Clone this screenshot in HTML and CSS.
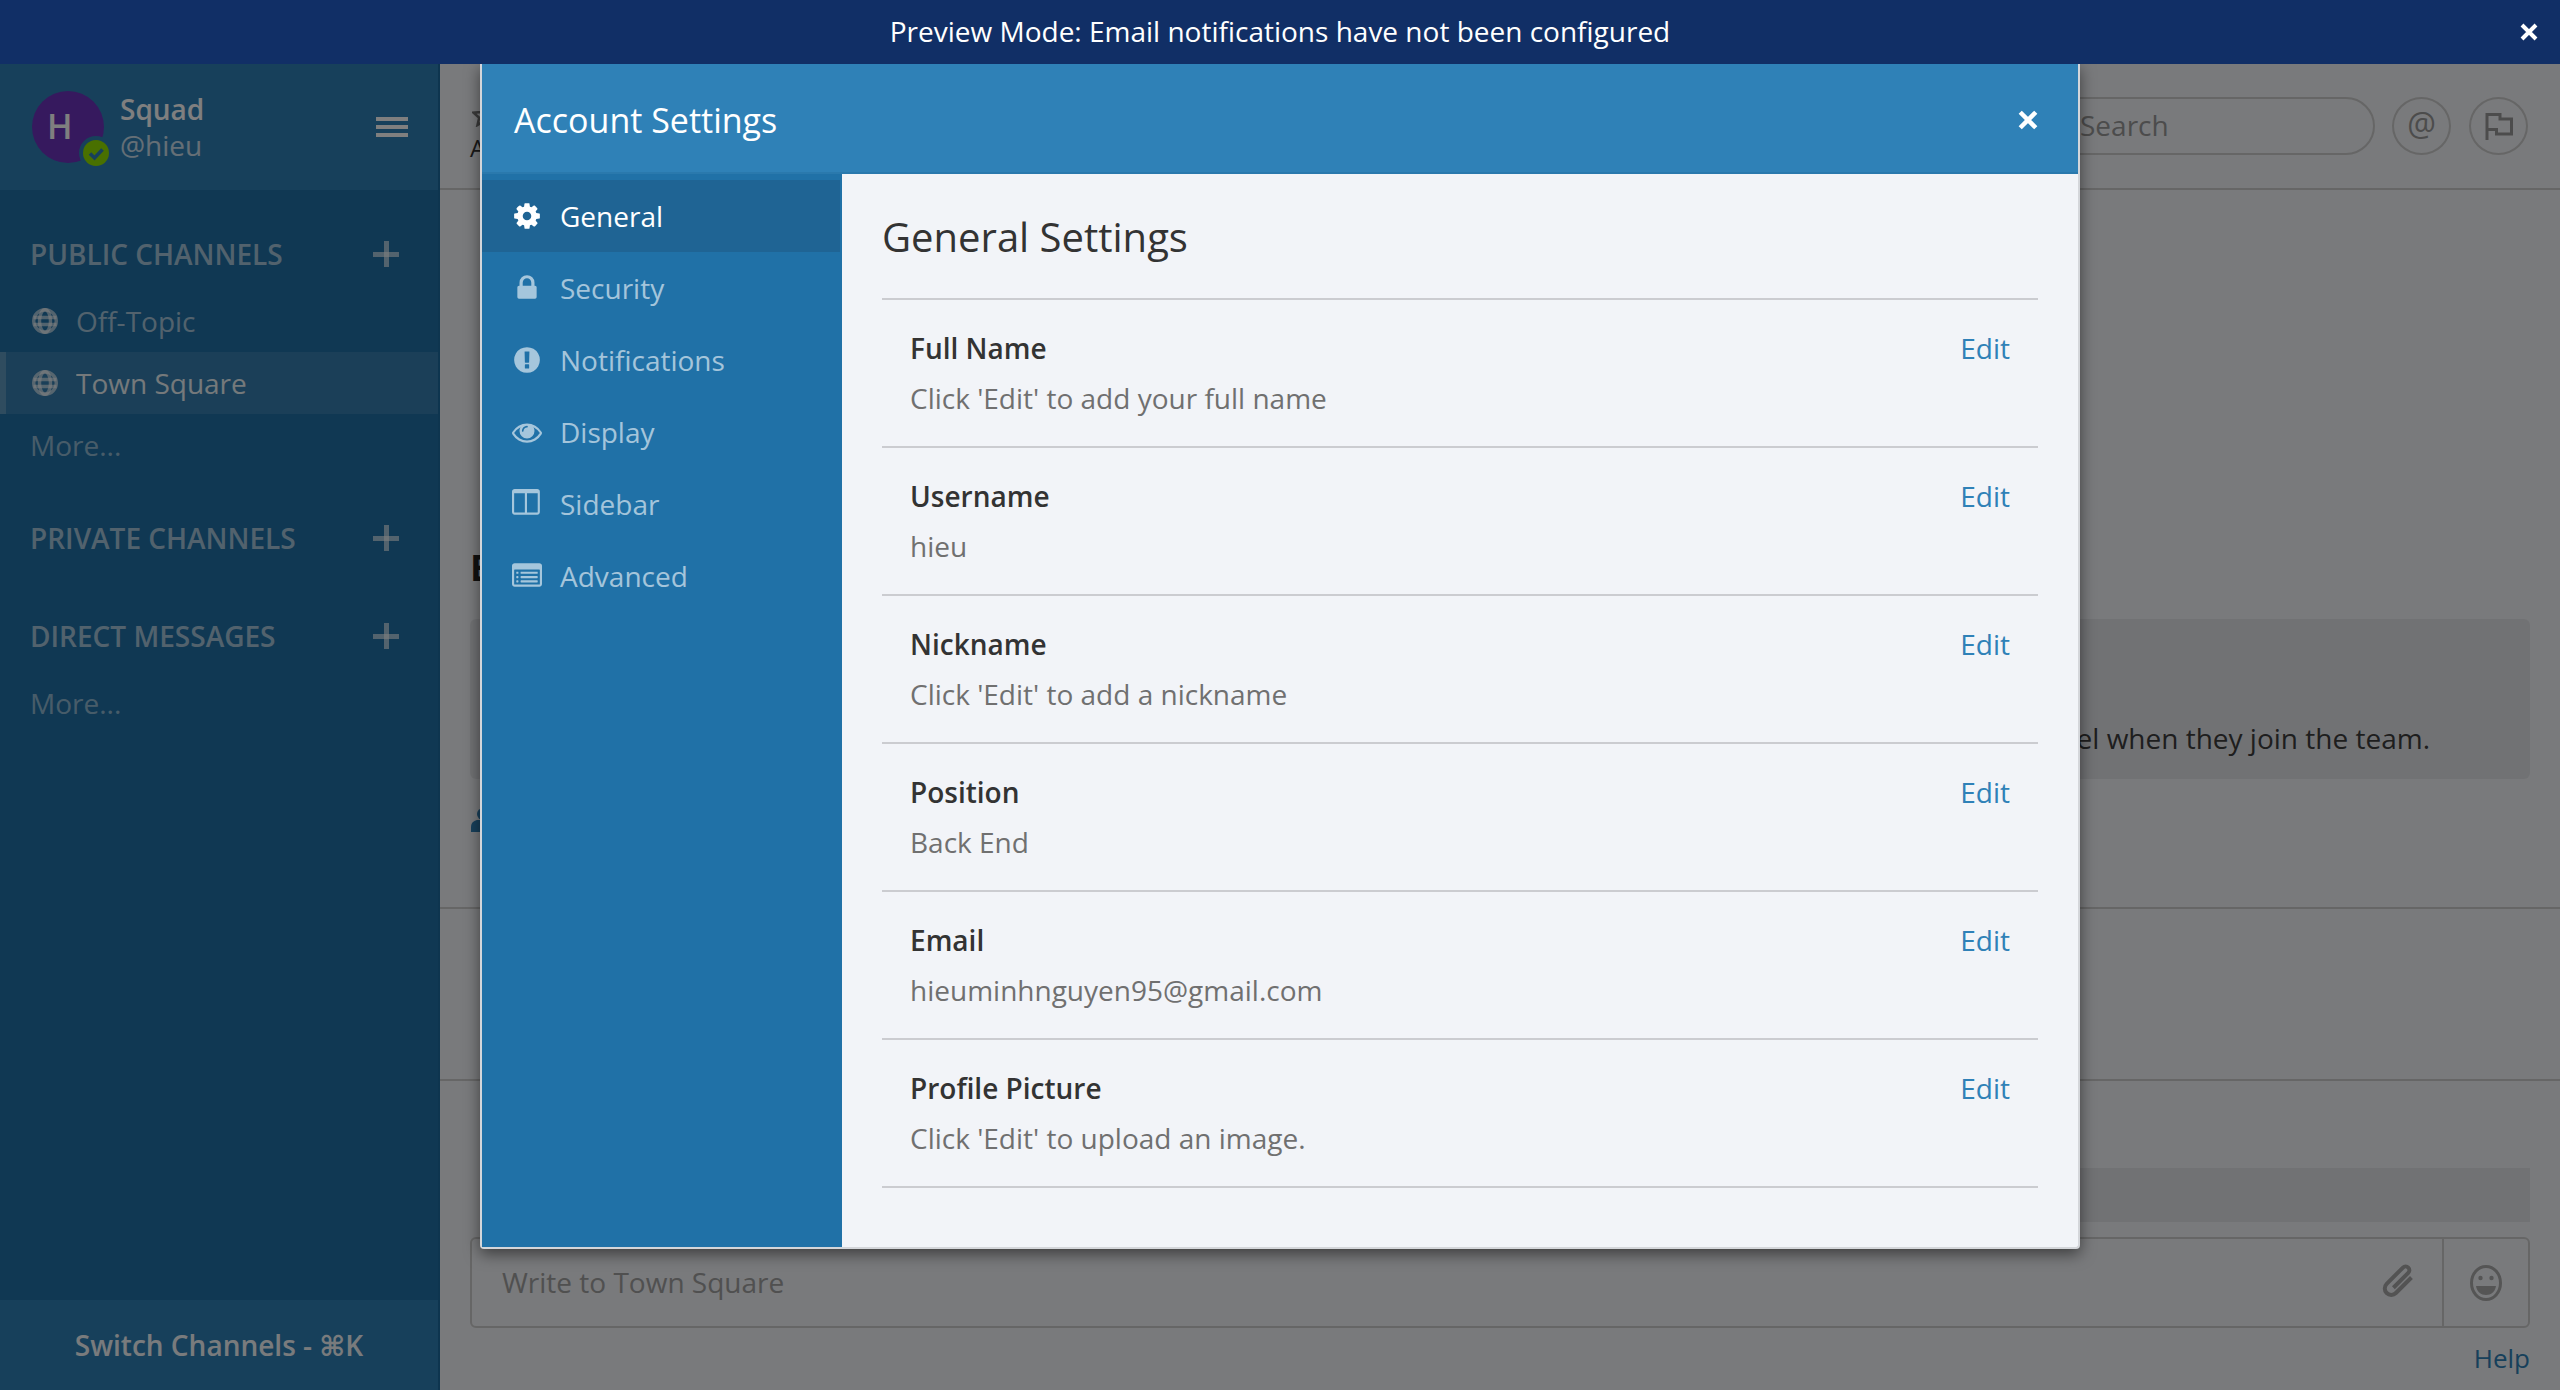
FILE: index.html
```html
<!DOCTYPE html>
<html lang="en">
<head>
  <meta charset="UTF-8">
  <title>Account Settings</title>
  <link rel="stylesheet" href="styles.css">
</head>
<body>
  <div class="banner">
    <span class="banner-spacer"></span>
    <span class="banner-text">Preview Mode: Email notifications have not been configured</span>
    <svg class="close-icon" viewBox="0 0 18 18"><path d="M2 2l14 14M16 2L2 16"/></svg>
  </div>

  <div class="app">
    <aside class="sidebar">
      <div class="sidebar-header">
        <div class="avatar">H
          <span class="status">
            <svg viewBox="0 0 26 26"><circle cx="13" cy="13" r="13" fill="#92e000"/><path d="M7 13.500l4.500 4.500 8-8.500" fill="none" stroke="#2f81b7" stroke-width="3.600"/></svg>
          </span>
        </div>
        <div class="team">
          <div class="team-name">Squad</div>
          <div class="team-user">@hieu</div>
        </div>
        <div class="hamburger"><i></i><i></i><i></i></div>
      </div>

      <div class="section-title first">Public Channels <span class="plus"></span></div>
      <a class="channel">
        <svg class="globe" viewBox="0 0 26 26"><use href="#globe"/></svg>
        <span>Off-Topic</span>
      </a>
      <a class="channel active">
        <svg class="globe" viewBox="0 0 26 26"><use href="#globe"/></svg>
        <span>Town Square</span>
      </a>
      <a class="channel more">More...</a>

      <div class="section-title private">Private Channels <span class="plus"></span></div>
      <div class="section-title direct">Direct Messages <span class="plus"></span></div>
      <a class="channel more after-direct">More...</a>

      <div class="switcher">Switch Channels - ⌘K</div>
    </aside>

    <main class="main">
      <header class="channel-header">
        <div class="channel-info">
          <svg class="star" viewBox="0 0 24 24"><path d="M12 2l3 7 7.500 .7-5.700 5 1.700 7.300-6.500-3.900-6.500 3.900 1.700-7.300-5.700-5 7.500-.7z"/></svg>
          <span>A</span>
        </div>
        <div class="search">Search</div>
        <div class="round-btn at">@</div>
        <div class="round-btn">
          <svg class="flag" viewBox="0 0 30 28"><path d="M3 28V1M3 2.500h13V7h11.500v15H12.500v-4.500H3"/></svg>
        </div>
      </header>

      <section class="posts">
        <h2>B</h2>
        <div class="intro">channel when they join the team.</div>
        <svg class="person" viewBox="0 0 24 24"><circle cx="13" cy="6" r="6"/><path d="M1 24v-5c0-5 4-7 7-7h10c3 0 6 2 6 7v5z"/></svg>
      </section>

      <section class="middle"></section>

      <section class="composer">
        <div class="hint-bar"></div>
        <div class="post-box">
          <span class="placeholder">Write to Town Square</span>
          <svg class="clip" viewBox="0 0 34 32"><path transform="rotate(45 17 16)" d="M24 4V26a6.500 6.500 0 0 1-13 0V3a3.700 3.700 0 0 1 7.500 0V24"/></svg>
          <span class="emoji-cell">
            <svg class="smile" viewBox="0 0 32 36"><ellipse cx="16" cy="18" rx="14.500" ry="16.500"/><circle class="solid" cx="10.500" cy="13" r="2.200"/><circle class="solid" cx="21.500" cy="13" r="2.200"/><path class="solid" d="M6 21h20c-1 6-5 9-10 9s-9-3-10-9z"/></svg>
          </span>
        </div>
        <div class="help">Help</div>
      </section>
    </main>
  </div>

  <div class="overlay"></div>

  <div class="modal">
    <div class="modal-header">
      <span>Account Settings</span>
      <svg class="close-icon" viewBox="0 0 18 18"><path d="M2 2l14 14M16 2L2 16"/></svg>
    </div>
    <div class="modal-body">
      <nav class="tabs">
        <a class="tab active">
          <svg viewBox="0 0 1792 1792"><path d="M1152 896q0-106-75-181t-181-75-181 75-75 181 75 181 181 75 181-75 75-181zm512-109v222q0 12-8 23t-20 13l-185 28q-19 54-39 91 35 50 107 138 10 12 10 25t-9 23q-27 37-99 108t-94 71q-12 0-26-9l-138-108q-44 23-91 38-16 136-29 186-7 28-36 28h-222q-14 0-24.500-8.500t-11.500-21.500l-28-184q-49-16-90-37l-141 107q-10 9-25 9-14 0-25-11-126-114-165-168-7-10-7-23 0-12 8-23 15-21 51-66.500t54-70.500q-27-50-41-99l-183-27q-13-2-21-12.500t-8-23.500v-222q0-12 8-23t19-13l186-28q14-46 39-92-40-57-107-138-10-12-10-24 0-10 9-23 26-36 98.500-107.500t94.500-71.500q13 0 26 10l138 107q44-23 91-38 16-136 29-186 7-28 36-28h222q14 0 24.500 8.500t11.500 21.500l28 184q49 16 90 37l142-107q9-9 24-9 13 0 25 10 129 119 165 170 7 8 7 22 0 12-8 23-15 21-51 66.500t-54 70.500q26 50 41 98l183 28q13 2 21 12.500t8 23.500z"/></svg>
          General
        </a>
        <a class="tab">
          <svg viewBox="0 0 1792 1792"><path d="M640 768h512v-192q0-106-75-181t-181-75-181 75-75 181v192zm832 96v576q0 40-28 68t-68 28h-960q-40 0-68-28t-28-68v-576q0-40 28-68t68-28h32v-192q0-184 132-316t316-132 316 132 132 316v192h32q40 0 68 28t28 68z"/></svg>
          Security
        </a>
        <a class="tab">
          <svg viewBox="0 0 1792 1792"><path d="M896 128q209 0 385.500 103t279.500 279.500 103 385.500-103 385.500-279.500 279.500-385.500 103-385.500-103-279.500-279.500-103-385.500 103-385.500 279.500-279.500 385.500-103zm128 1247v-190q0-14-9-23.500t-22-9.500h-192q-13 0-23 10t-10 23v190q0 13 10 23t23 10h192q13 0 22-9.500t9-23.500zm-2-344l18-621q0-12-10-18-10-8-24-8h-220q-14 0-24 8-10 6-10 18l17 621q0 10 10 17.500t24 7.500h185q14 0 23.500-7.500t10.500-17.500z"/></svg>
          Notifications
        </a>
        <a class="tab">
          <svg viewBox="0 0 1792 1792"><path d="M1664 960q-152-236-381-353 61 104 61 225 0 185-131.500 316.500t-316.500 131.500-316.500-131.500-131.500-316.500q0-121 61-225-229 117-381 353 133 205 333.500 326.500t434.500 121.500 434.500-121.500 333.500-326.500zm-720-384q0-20-14-34t-34-14q-125 0-214.500 89.500t-89.500 214.500q0 20 14 34t34 14 34-14 14-34q0-86 61-147t147-61q20 0 34-14t14-34zm848 384q0 34-20 69-140 230-376.500 368.500t-499.500 138.500-499.500-139-376.500-368q-20-35-20-69t20-69q140-229 376.500-368t499.500-139 499.500 139 376.500 368q20 35 20 69z"/></svg>
          Display
        </a>
        <a class="tab">
          <svg viewBox="0 0 1792 1792"><path d="M160 1408h608v-1152h-640v1120q0 13 9.500 22.500t22.500 9.500zm1376-32v-1120h-640v1152h608q13 0 22.500-9.500t9.500-22.500zm128-1216v1216q0 66-47 113t-113 47h-1344q-66 0-113-47t-47-113v-1216q0-66 47-113t113-47h1344q66 0 113 47t47 113z"/></svg>
          Sidebar
        </a>
        <a class="tab">
          <svg viewBox="0 0 1792 1792"><path d="M384 1184v64q0 13-9.500 22.500t-22.500 9.500h-64q-13 0-22.500-9.500t-9.500-22.500v-64q0-13 9.500-22.500t22.500-9.500h64q13 0 22.500 9.500t9.500 22.500zm0-256v64q0 13-9.500 22.500t-22.500 9.500h-64q-13 0-22.500-9.500t-9.500-22.500v-64q0-13 9.500-22.500t22.500-9.500h64q13 0 22.500 9.500t9.500 22.500zm0-256v64q0 13-9.500 22.500t-22.500 9.500h-64q-13 0-22.500-9.500t-9.500-22.500v-64q0-13 9.500-22.500t22.500-9.500h64q13 0 22.500 9.500t9.500 22.500zm1152 512v64q0 13-9.500 22.500t-22.500 9.500h-960q-13 0-22.500-9.500t-9.500-22.500v-64q0-13 9.500-22.500t22.500-9.500h960q13 0 22.500 9.500t9.500 22.500zm0-256v64q0 13-9.500 22.500t-22.500 9.500h-960q-13 0-22.500-9.500t-9.500-22.500v-64q0-13 9.500-22.500t22.500-9.500h960q13 0 22.500 9.500t9.500 22.500zm0-256v64q0 13-9.500 22.500t-22.500 9.500h-960q-13 0-22.500-9.500t-9.500-22.500v-64q0-13 9.500-22.500t22.500-9.500h960q13 0 22.500 9.500t9.500 22.500zm128 704v-832q0-13-9.500-22.500t-22.500-9.500h-1472q-13 0-22.500 9.500t-9.500 22.500v832q0 13 9.500 22.500t22.500 9.500h1472q13 0 22.500-9.500t9.500-22.500zm128-1088v1088q0 66-47 113t-113 47h-1472q-66 0-113-47t-47-113v-1088q0-66 47-113t113-47h1472q66 0 113 47t47 113z"/></svg>
          Advanced
        </a>
      </nav>

      <div class="settings">
        <h3>General Settings</h3>
        <div class="row">
          <div><div class="label">Full Name</div><div class="value">Click 'Edit' to add your full name</div></div>
          <a class="edit">Edit</a>
        </div>
        <div class="row">
          <div><div class="label">Username</div><div class="value">hieu</div></div>
          <a class="edit">Edit</a>
        </div>
        <div class="row">
          <div><div class="label">Nickname</div><div class="value">Click 'Edit' to add a nickname</div></div>
          <a class="edit">Edit</a>
        </div>
        <div class="row">
          <div><div class="label">Position</div><div class="value">Back End</div></div>
          <a class="edit">Edit</a>
        </div>
        <div class="row">
          <div><div class="label">Email</div><div class="value">hieuminhnguyen95@gmail.com</div></div>
          <a class="edit">Edit</a>
        </div>
        <div class="row">
          <div><div class="label">Profile Picture</div><div class="value">Click 'Edit' to upload an image.</div></div>
          <a class="edit">Edit</a>
        </div>
      </div>
    </div>
  </div>

  <svg class="defs" width="0" height="0">
    <symbol id="globe" viewBox="0 0 26 26">
      <g fill="none" stroke="currentColor" stroke-width="3.400">
        <circle cx="13" cy="13" r="11.300"/>
        <ellipse cx="13" cy="13" rx="5.500" ry="11.300"/>
        <path d="M1.500 9.500h23M1.500 16.500h23"/>
      </g>
    </symbol>
  </svg>
</body>
</html>
```

FILE: styles.css
```css
* {
  box-sizing: border-box;
}
body {
  margin: 0;
  height: 100vh;
  overflow: hidden;
  display: flex;
  flex-direction: column;
  font-family: "Open Sans", "DejaVu Sans", sans-serif;
  font-size: 28px;
  line-height: 40px;
  color: #333;
  background: #f2f4f8;
}
.defs {
  position: absolute;
}

/* top banner stays above the overlay */
.banner {
  position: relative;
  z-index: 3;
  flex: none;
  height: 64px;
  padding: 0 22px;
  display: flex;
  align-items: center;
  background: #112f66;
  color: #fff;
}
.banner-spacer {
  width: 18px;
}
.banner-text {
  flex: 1;
  padding-bottom: 3px;
  text-align: center;
}
.close-icon {
  width: 18px;
  height: 18px;
  fill: none;
  stroke: #fff;
  stroke-width: 4;
}

.app {
  flex: 1;
  display: flex;
  min-height: 0;
}

/* sidebar */
.sidebar {
  flex: none;
  width: 440px;
  display: flex;
  flex-direction: column;
  background: #2071a7;
  color: #fff;
  border-right: 2px solid #1d6a9e;
}
.sidebar-header {
  flex: none;
  height: 126px;
  padding: 0 30px 0 32px;
  display: flex;
  align-items: center;
  background: #2f81b7;
}
.avatar {
  position: relative;
  flex: none;
  width: 72px;
  height: 72px;
  margin-right: 16px;
  padding-left: 15px;
  border-radius: 50%;
  background: #6c32bc;
  font-size: 34px;
  font-weight: 600;
  line-height: 70px;
}
.status {
  position: absolute;
  right: -9px;
  bottom: -7px;
  width: 34px;
  height: 34px;
  padding: 4px;
  border-radius: 50%;
  background: #2f81b7;
  display: flex;
}
.team {
  flex: 1;
  line-height: 36px;
}
.team-name {
  font-weight: 600;
}
.team-user {
  opacity: 0.75;
}
.hamburger {
  width: 32px;
  display: flex;
  flex-direction: column;
  gap: 4px;
}
.hamburger i {
  display: block;
  height: 4px;
  background: #fff;
}
.section-title {
  flex: none;
  height: 40px;
  padding: 0 30px 0 30px;
  display: flex;
  justify-content: space-between;
  align-items: center;
  font-weight: 600;
  text-transform: uppercase;
  color: rgba(255, 255, 255, 0.6);
}
.section-title.first {
  margin: 44px 0 16px;
}
.section-title.private {
  margin-top: 42px;
}
.section-title.direct {
  margin-top: 58px;
}
.plus {
  width: 26px;
  height: 26px;
  margin-right: 9px;
  background:
    linear-gradient(currentColor, currentColor) center / 100% 5px no-repeat,
    linear-gradient(currentColor, currentColor) center / 5px 100% no-repeat;
}
.channel {
  flex: none;
  height: 62px;
  padding-left: 32px;
  display: flex;
  align-items: center;
  gap: 18px;
  color: rgba(255, 255, 255, 0.6);
}
.channel.active {
  padding-left: 26px;
  border-left: 6px solid rgba(255, 255, 255, 0.2);
  background: rgba(255, 255, 255, 0.1);
  color: #fff;
}
.channel.active span {
  opacity: 0.9;
}
.channel.more {
  padding-left: 30px;
  color: rgba(255, 255, 255, 0.52);
}
.channel.after-direct {
  margin-top: 16px;
}
.globe {
  width: 26px;
  height: 26px;
  color: rgba(255, 255, 255, 0.6);
}
.switcher {
  margin-top: auto;
  flex: none;
  height: 90px;
  padding-bottom: 1px;
  display: flex;
  justify-content: center;
  align-items: center;
  background: #2f81b7;
  font-weight: 600;
  opacity: 0.95;
}

/* channel view behind the dialog */
.main {
  flex: 1;
  min-width: 0;
  display: flex;
  flex-direction: column;
}
.channel-header {
  flex: none;
  height: 126px;
  padding: 33px 32px 0 30px;
  display: flex;
  align-items: flex-start;
  border-bottom: 2px solid #ccc;
}
.channel-info {
  flex: 1;
  display: flex;
  flex-direction: column;
  font-size: 24px;
  line-height: 34px;
  white-space: nowrap;
}
.star {
  width: 24px;
  height: 24px;
  margin: 6px 0 4px 2px;
  fill: none;
  stroke: #777;
  stroke-width: 2.500;
}
.search {
  width: 480px;
  height: 58px;
  margin-right: 17px;
  padding-left: 183px;
  border: 2px solid #ccc;
  border-radius: 29px;
  color: #999;
  line-height: 53px;
}
.round-btn {
  width: 59px;
  height: 58px;
  margin-left: 1px;
  margin-right: 17px;
  border: 2px solid #ccc;
  border-radius: 50%;
  display: flex;
  justify-content: center;
  align-items: center;
  color: #999;
}
.round-btn:last-child {
  margin-right: 0;
}
.round-btn.at {
  font-size: 32px;
  margin-left: 0;
  padding-bottom: 4px;
}
.flag {
  width: 30px;
  height: 28px;
  fill: none;
  stroke: #999;
  stroke-width: 3;
}
.posts {
  flex: none;
  height: 719px;
  padding: 358px 30px 0;
  border-bottom: 2px solid #ccc;
}
.posts h2 {
  margin: 0 0 31px;
  font-size: 36px;
  line-height: 40px;
  font-weight: 700;
  color: #222;
}
.intro {
  height: 160px;
  padding: 99px 100px 0 0;
  border-radius: 6px;
  background: rgba(0, 0, 0, 0.06);
  color: #3d3d3d;
  text-align: right;
  white-space: nowrap;
}
.person {
  display: block;
  width: 24px;
  height: 24px;
  margin-top: 29px;
  fill: #2f81b7;
}
.middle {
  flex: none;
  height: 172px;
  border-bottom: 2px solid #ccc;
}
.composer {
  flex: 1;
  padding: 87px 30px 0;
}
.hint-bar {
  height: 54px;
  margin-left: 40px;
  background: rgba(0, 0, 0, 0.06);
}
.post-box {
  height: 91px;
  margin-top: 15px;
  padding-left: 30px;
  display: flex;
  align-items: center;
  border: 2px solid #ccc;
  border-radius: 6px;
  color: #a0a0a0;
}
.placeholder {
  flex: 1;
  padding-bottom: 2px;
}
.clip {
  width: 34px;
  height: 32px;
  margin: 0 27px 3px 0;
  overflow: visible;
  fill: none;
  stroke: #a6a6a6;
  stroke-width: 4;
}
.emoji-cell {
  align-self: stretch;
  width: 86px;
  display: flex;
  justify-content: center;
  align-items: center;
  border-left: 2px solid #ccc;
}
.smile {
  width: 32px;
  height: 36px;
  fill: none;
  stroke: #aaa;
  stroke-width: 3;
}
.smile .solid {
  fill: #aaa;
  stroke: none;
}
.help {
  margin-top: 10px;
  font-size: 26px;
  text-align: right;
  color: #2f81b7;
}

.overlay {
  position: absolute;
  top: 64px;
  left: 0;
  right: 0;
  bottom: 0;
  z-index: 1;
  background: rgba(0, 0, 0, 0.5);
}

/* settings dialog */
.modal {
  position: absolute;
  top: 64px;
  left: 480px;
  z-index: 2;
  width: 1600px;
  height: 1185px;
  display: flex;
  flex-direction: column;
  background: #f2f4f8;
  border: 2px solid #d4d6da;
  border-top: 0;
  border-radius: 0 0 4px 4px;
  box-shadow: 0 5px 15px rgba(0, 0, 0, 0.5);
}
.modal-header {
  flex: none;
  height: 110px;
  padding: 3px 40px 0 32px;
  display: flex;
  justify-content: space-between;
  align-items: center;
  background: #2f81b7;
  color: #fff;
  font-size: 34px;
  border-bottom: 2px solid #2a79ad;
}
.modal-header .close-icon {
  width: 20px;
  height: 20px;
}
.modal-body {
  flex: 1;
  display: flex;
  min-height: 0;
}
.tabs {
  flex: none;
  width: 360px;
  padding: 6px 2px 0 0;
  background: #2071a7;
}
.tab {
  height: 72px;
  padding-left: 30px;
  display: flex;
  align-items: center;
  gap: 18px;
  color: rgba(255, 255, 255, 0.6);
}
.tab svg {
  width: 30px;
  height: 30px;
  fill: currentColor;
}
.tab.active {
  background: #1f6494;
  color: #fff;
}
.settings {
  flex: 1;
  padding: 38px 40px 0;
}
.settings h3 {
  margin: 0 0 36px;
  font-size: 40px;
  line-height: 50px;
  font-weight: 400;
}
.row {
  height: 148px;
  padding: 28px 28px 0 28px;
  display: flex;
  justify-content: space-between;
  align-items: flex-start;
  border-bottom: 2px solid #cbccd0;
}
.row:first-of-type {
  height: 150px;
  border-top: 2px solid #cbccd0;
}
.label {
  font-weight: 600;
}
.value {
  margin-top: 10px;
  color: #707070;
}
.edit {
  color: #2f81b7;
}
```
